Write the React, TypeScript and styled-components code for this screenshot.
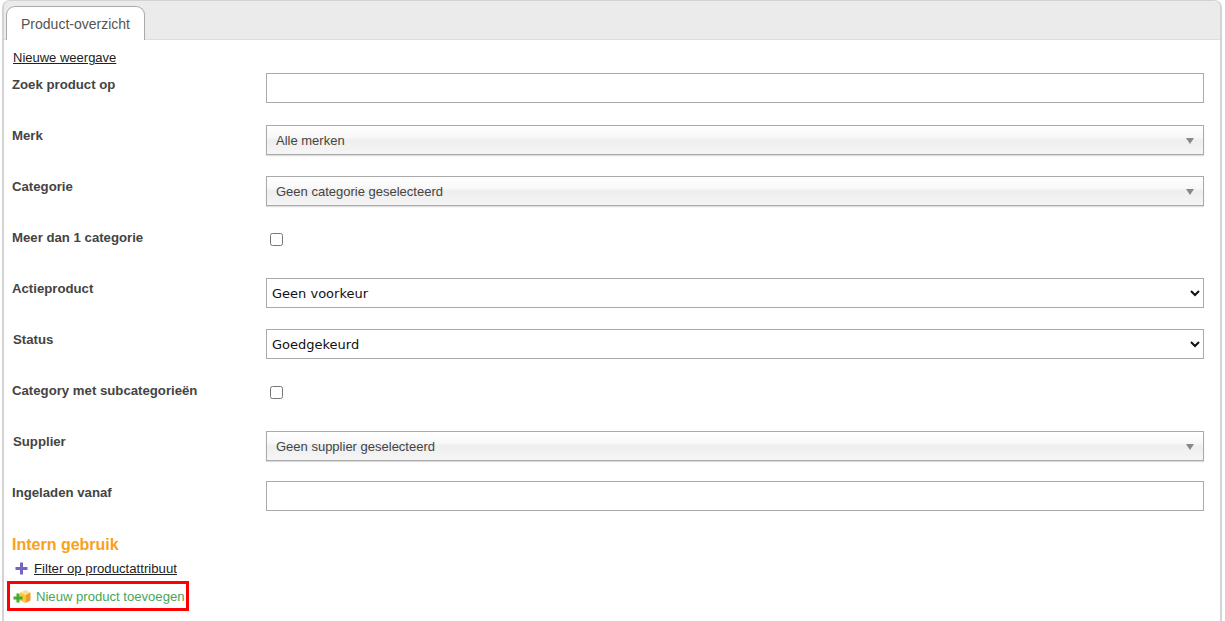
import React from 'react';
import styled, { createGlobalStyle } from 'styled-components';

const GlobalStyle = createGlobalStyle`
  html, body {
    margin: 0;
    padding: 0;
    background: #fff;
    font-family: "Liberation Sans", Arial, sans-serif;
    overflow: hidden;
  }
`;

const Panel = styled.div`
  box-sizing: border-box;
  width: 1220px;
  height: 640px;
  margin-left: 2px;
  border: 1px solid #d3d3d3;
  border-width: 1px 2px 0 2px;
  border-radius: 8px 8px 0 0;
`;

const TabBar = styled.div`
  box-sizing: border-box;
  height: 39px;
  display: flex;
  align-items: flex-end;
  padding-left: 2px;
  background: #ebebeb;
  border-bottom: 1px solid #ddd;
  border-radius: 6px 6px 0 0;
`;

const Tab = styled.div`
  box-sizing: border-box;
  width: 139px;
  height: 34px;
  margin-bottom: -1px;
  padding-top: 9px;
  text-align: center;
  font-size: 14px;
  color: #555;
  background: #fff;
  border: 1px solid #aaa;
  border-bottom: 0;
  border-radius: 9px 9px 0 0;
`;

const Content = styled.div`
  padding: 10px 16px 0 8px;
`;

const TopLink = styled.a`
  display: block;
  height: 13px;
  margin-bottom: 11px;
  padding-left: 1px;
  font-size: 13px;
  line-height: 15px;
  color: #222;
  text-decoration: underline;
`;

const Row = styled.div`
  display: grid;
  grid-template-columns: 254px 1fr;
  height: 51px;
`;

const Label = styled.label<{ $indent?: number }>`
  padding: 3px 0 0 ${(p) => p.$indent ?? 0}px;
  font-size: 13.2px;
  line-height: 15px;
  font-weight: bold;
  color: #444;
`;

const TextInput = styled.input`
  box-sizing: border-box;
  width: 100%;
  height: 30px;
  margin-top: -1px;
  border: 1px solid #aaa;
  border-radius: 0;
  outline: none;
  background: #fff;
`;

const NativeSelect = styled.select`
  box-sizing: border-box;
  width: 100%;
  height: 30px;
  padding-left: 1px;
  border: 1px solid #aaa;
  border-radius: 0;
  background: #fff;
  font-family: "DejaVu Sans", Verdana, sans-serif;
  font-size: 13px;
  color: #111;
`;

const FancySelect = styled.div`
  box-sizing: border-box;
  height: 30px;
  display: flex;
  align-items: center;
  justify-content: space-between;
  padding: 1px 9px 0;
  border: 1px solid #aaa;
  background: linear-gradient(#fff 0%, #f8f8f8 40%, #eeeeee 50%, #f5f5f5 100%);
  box-shadow: 0 1px 1px #ddd;
  font-size: 13px;
  color: #444;
`;

const Caret = styled.span`
  width: 0;
  height: 0;
  border-left: 4px solid transparent;
  border-right: 4px solid transparent;
  border-top: 6px solid #888;
`;

const CheckCell = styled.div`
  padding: 6px 0 0 4px;
`;

const Check = styled.input`
  display: block;
  width: 13px;
  height: 13px;
  margin: 0;
`;

const SectionTitle = styled.h3`
  margin: 2px 0 0;
  font-size: 16px;
  line-height: 20px;
  font-weight: bold;
  color: #f9a11b;
`;

const FilterLink = styled.a`
  display: flex;
  align-items: center;
  gap: 6px;
  margin: 4px 0 0 3px;
  height: 18px;
  font-size: 13.2px;
  color: #222;
  text-decoration: underline;
`;

const Highlight = styled.div`
  box-sizing: border-box;
  width: 182px;
  height: 30px;
  display: flex;
  align-items: center;
  gap: 5px;
  margin: 4px 0 0 -5px;
  padding-left: 3px;
  border: 3px solid #f00;
  font-size: 13.1px;
  color: #46a758;
`;

const PlusIcon = () => (
  <svg width="13" height="13" viewBox="0 0 13 13">
    <path d="M5 0.500h3v4.500h4.500v3H8v4.500H5V8H0.500V5H5z" fill="#7565c0" />
  </svg>
);

const NewProductIcon = () => (
  <svg width="18" height="13" viewBox="0 0 18 13">
    <path d="M7 2.500l5.500-2.500 5 2.500-5 2.500z" fill="#fde08a" />
    <path d="M7 2.500l5.500 2.500v8L7 10.500z" fill="#f8c33e" />
    <path d="M12.500 5l5-2.500v8l-5 2.500z" fill="#ee9b2b" />
    <path d="M3.500 3.500h3v3h3v3h-3v3h-3v-3h-3v-3h3z" fill="#3fae2a" />
  </svg>
);

export default function App() {
  return (
    <>
      <GlobalStyle />
      <Panel>
        <TabBar>
          <Tab>Product-overzicht</Tab>
        </TabBar>
        <Content>
          <TopLink href="#">Nieuwe weergave</TopLink>
          <Row>
            <Label>Zoek product op</Label>
            <TextInput type="text" />
          </Row>
          <Row>
            <Label>Merk</Label>
            <FancySelect>
              Alle merken
              <Caret />
            </FancySelect>
          </Row>
          <Row>
            <Label>Categorie</Label>
            <FancySelect>
              Geen categorie geselecteerd
              <Caret />
            </FancySelect>
          </Row>
          <Row>
            <Label>Meer dan 1 categorie</Label>
            <CheckCell>
              <Check type="checkbox" />
            </CheckCell>
          </Row>
          <Row>
            <Label>Actieproduct</Label>
            <NativeSelect defaultValue="Geen voorkeur">
              <option>Geen voorkeur</option>
            </NativeSelect>
          </Row>
          <Row>
            <Label $indent={1}>Status</Label>
            <NativeSelect defaultValue="Goedgekeurd">
              <option>Goedgekeurd</option>
            </NativeSelect>
          </Row>
          <Row>
            <Label>Category met subcategorieën</Label>
            <CheckCell>
              <Check type="checkbox" />
            </CheckCell>
          </Row>
          <Row>
            <Label $indent={1}>Supplier</Label>
            <FancySelect>
              Geen supplier geselecteerd
              <Caret />
            </FancySelect>
          </Row>
          <Row>
            <Label>Ingeladen vanaf</Label>
            <TextInput type="text" />
          </Row>
          <SectionTitle>Intern gebruik</SectionTitle>
          <FilterLink href="#">
            <PlusIcon />
            Filter op productattribuut
          </FilterLink>
          <Highlight>
            <NewProductIcon />
            Nieuw product toevoegen
          </Highlight>
        </Content>
      </Panel>
    </>
  );
}
